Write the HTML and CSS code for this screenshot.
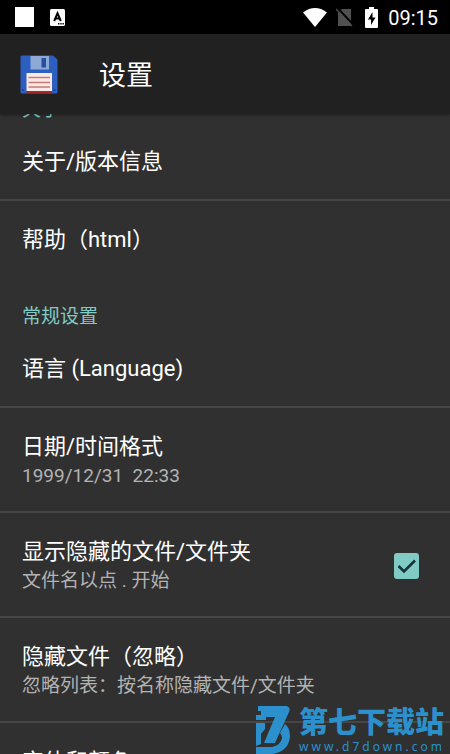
FILE: index.html
```html
<!DOCTYPE html>
<html lang="zh-CN">
<head>
<meta charset="utf-8">
<meta name="viewport" content="width=device-width, initial-scale=1">
<title>设置</title>
<link rel="stylesheet" href="styles.css">
</head>
<body>
<div class="screen">
  <div class="status">
    <svg class="status-app" viewBox="0 0 19 20" aria-hidden="true"><path fill="#fff" d="M0 0h19v20H0z"/></svg>
    <svg class="status-ime" viewBox="0 0 15 17" aria-hidden="true">
      <rect width="15" height="17" rx="1.5" fill="#fff"/>
      <path fill="none" stroke="#000" stroke-width="2" d="M4.2 12 7.5 4.2 10.8 12M5.4 9.6h4.2"/>
      <path fill="#000" d="M8 14h1.4v1.4H8zM10.3 14h1.4v1.4h-1.4zM12.5 14h1.4v1.4h-1.4z"/>
    </svg>
    <span class="spacer"></span>
    <svg class="status-wifi" viewBox="0 0 24 19" aria-hidden="true"><path fill="#fff" d="M0 4.5Q12-4.300 24 4.500L12 19z"/></svg>
    <svg class="status-sim" viewBox="0 0 17 19" aria-hidden="true">
      <path fill="#505050" d="M6 1h9v17H2V5z"/>
      <path stroke="#000" stroke-width="2" d="M1.500 0l17 18"/>
      <path stroke="#505050" stroke-width="1.300" d="M0 1l16 17"/>
    </svg>
    <svg class="status-battery" viewBox="0 0 13 21" aria-hidden="true">
      <path fill="#fff" d="M4 0h5v2h3q1 0 1 1v17q0 1-1 1H1q-1 0-1-1V3q0-1 1-1h3z"/>
      <path fill="#000" d="M7.500 5 3 12.500h3V18l4.500-7.500h-3z"/>
    </svg>
    <time class="clock">09:15</time>
  </div>
  <header class="appbar">
    <svg class="logo" viewBox="0 0 38 39" aria-hidden="true">
      <path fill="#2c5fc0" d="M2 .500h31l4.500 4V37q0 1.500-1.500 1.500H2Q.500 38.500.500 37V2Q.500.500 2 .500z"/>
      <path fill="#1d4696" d="M2 34h2v2H2zM33.500 34h2v2h-2z"/>
      <path fill="#8ea9d8" d="M10.500 1H29v13.500H10.500z"/>
      <path fill="#2550a0" d="M21.500 3h4.500v9.500h-4.500z"/>
      <path fill="#fbe9e6" d="M6.500 18h25.500v18H6.500z"/>
      <path fill="#a3262a" d="M6.500 36h25.500v2.500H6.500z"/>
      <path stroke="#c37a78" stroke-width="1.500" d="M8.500 22.500h21.500M8.500 27.500h21.500M8.500 32h21.500"/>
    </svg>
    <h1 class="title">设置</h1>
  </header>
  <main class="viewport">
    <div class="list">
      <h2 class="category">关于</h2>
      <button class="row" type="button"><span class="name">关于/版本信息</span></button>
      <button class="row last" type="button"><span class="name">帮助（html）</span></button>
      <h2 class="category">常规设置</h2>
      <button class="row" type="button"><span class="name">语言 (Language)</span></button>
      <button class="row double" type="button"><span class="name">日期/时间格式</span><span class="summary">1999/12/31&nbsp; 22:33</span></button>
      <label class="row double with-check" for="hidden-files">
        <span class="texts"><span class="name">显示隐藏的文件/文件夹</span><span class="summary">文件名以点 . 开始</span></span>
        <span class="check">
          <input id="hidden-files" type="checkbox" checked>
          <svg viewBox="0 0 25 26" aria-hidden="true"><path fill="none" stroke="#12343a" stroke-width="2.600" d="M4.500 13l5.500 5.500L21 7.500"/></svg>
        </span>
      </label>
      <button class="row double" type="button"><span class="name">隐藏文件（忽略）</span><span class="summary">忽略列表：按名称隐藏文件/文件夹</span></button>
      <button class="row" type="button"><span class="name">字体和颜色</span></button>
    </div>
  </main>
  <aside class="mark">
    <svg class="mark-logo" viewBox="0 0 36 48" aria-hidden="true">
      <path fill="#2b90cb" d="M3 0h29q4 2 2 6L20 37H9L20 11h-9v3H1V9h5V5H3z"/>
      <path fill="#2b90cb" d="M30 18q5 4 5 12-1 15-17 18H1v-7h16q9-2 10-9 0-3-2-5z"/>
      <path fill="#2b90cb" d="M1 17h9v6l-4 5v10l-5 2z"/>
    </svg>
    <span class="mark-text"><strong class="mark-name">第七下载站</strong><span class="mark-url">www.d7down.com</span></span>
  </aside>
</div>
</body>
</html>
```
FILE: styles.css
```css
* {
  box-sizing: border-box;
}

body {
  margin: 0;
  background: #303030;
  color: #fff;
  font-family: Roboto, "Noto Sans CJK SC", sans-serif;
}

.screen {
  position: relative;
  display: flex;
  flex-direction: column;
  height: 100vh;
  overflow: hidden;
}

.status {
  display: flex;
  flex: none;
  align-items: center;
  height: 34px;
  padding: 0 12px 0 15px;
  background: #000;
}

.status svg {
  flex: none;
}

.status-app {
  width: 19px;
  height: 20px;
}

.status-ime {
  width: 15px;
  height: 17px;
  margin-left: 16px;
}

.spacer {
  flex: 1;
}

.status-wifi {
  width: 24px;
  height: 19px;
}

.status-sim {
  width: 17px;
  height: 19px;
  margin-left: 9px;
}

.status-battery {
  width: 13px;
  height: 21px;
  margin-left: 12px;
}

.clock {
  margin-left: 10px;
  padding-top: 2px;
  font-size: 20px;
  line-height: 24px;
}

.appbar {
  position: relative;
  display: flex;
  flex: none;
  align-items: center;
  gap: 41px;
  height: 80px;
  padding: 0 20px;
  background: #212121;
  box-shadow: 0 1px 3px rgba(0, 0, 0, 0.4);
}

.logo {
  width: 38px;
  height: 39px;
}

.title {
  margin: 0;
  padding-top: 4px;
  font-size: 27px;
  font-weight: 400;
  line-height: 40px;
}

.viewport {
  flex: 1;
  min-height: 0;
  overflow: hidden;
}

/* The list is shown scrolled past its first heading. */
.list {
  margin-top: -44px;
}

.category {
  margin: 0;
  padding: 26px 22px 0;
  height: 53px;
  color: #80cbc4;
  font-size: 19px;
  font-weight: 400;
  line-height: 27px;
}

.row {
  display: block;
  width: 100%;
  padding: 24px 22px 23px;
  border: 0;
  border-bottom: 2px solid #464646;
  background: none;
  color: inherit;
  font: inherit;
  text-align: left;
}

.row.last {
  border-bottom: 0;
}

.row.double {
  padding-bottom: 21px;
}

.name,
.summary {
  display: block;
}

.name {
  font-size: 22px;
  line-height: 29px;
}

.summary {
  color: #b3b3b3;
  font-size: 19px;
  line-height: 29px;
}

.with-check {
  display: flex;
  align-items: center;
  justify-content: space-between;
  padding-right: 31px;
}

.check {
  display: grid;
  width: 25px;
  height: 26px;
}

.check input,
.check svg {
  grid-area: 1 / 1;
  width: 100%;
  height: 100%;
  margin: 0;
}

.check input {
  appearance: none;
  border-radius: 3px;
  background: #80cbc4;
}

.check svg {
  pointer-events: none;
}

.mark {
  position: absolute;
  right: 5px;
  bottom: 0;
  display: flex;
  gap: 8px;
  color: #2b90cb;
}

.mark-logo {
  width: 36px;
  height: 48px;
}

.mark-text {
  display: flex;
  flex-direction: column;
}

.mark-name {
  font-size: 29px;
  font-weight: 900;
  line-height: 34px;
}

.mark-url {
  font-family: "Noto Sans", sans-serif;
  font-size: 12px;
  letter-spacing: 3px;
  line-height: 14px;
}
```
